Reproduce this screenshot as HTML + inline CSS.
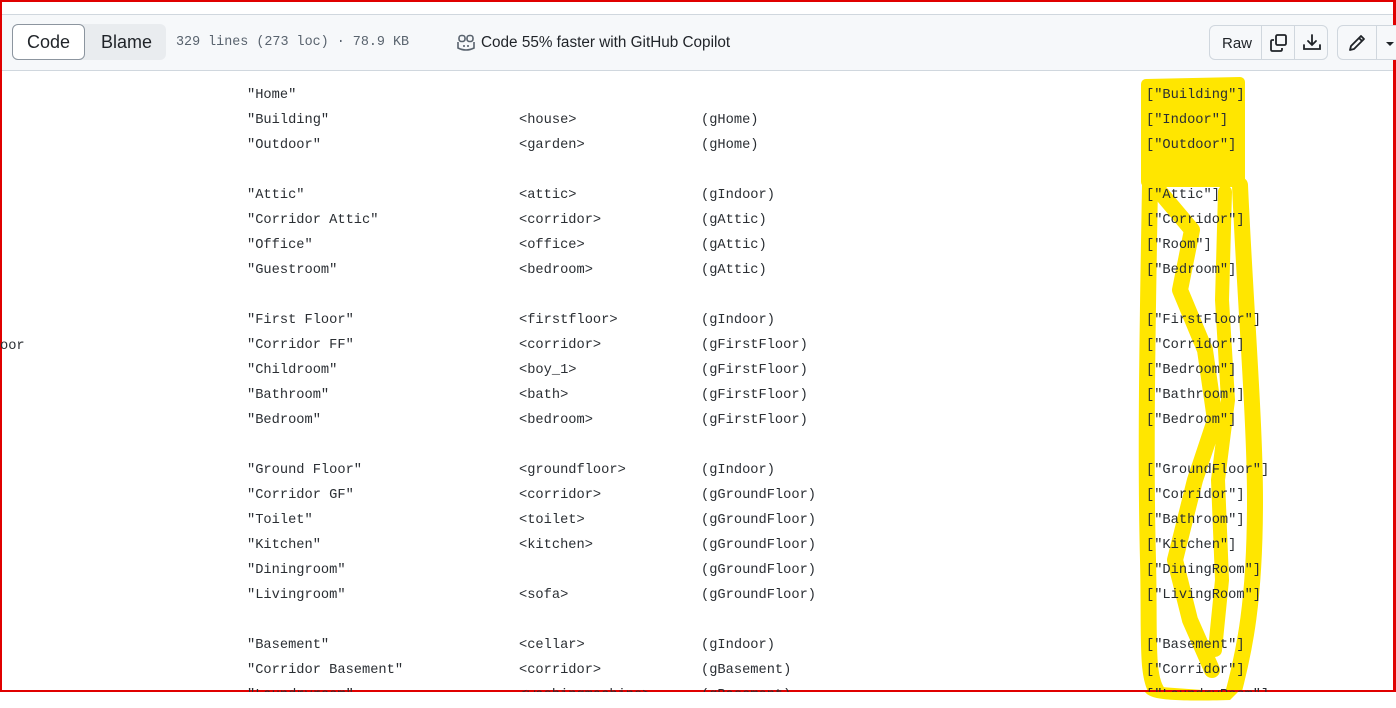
<!DOCTYPE html>
<html><head><meta charset="utf-8"><style>
*{margin:0;padding:0;box-sizing:border-box}
body{width:1396px;height:706px;background:#fff;position:relative;overflow:hidden;font-family:"Liberation Sans",sans-serif}
.frame{position:absolute;left:0;top:0;width:1396px;height:692px;border:2px solid #e00000;border-right-width:3px}
.hdr{position:absolute;left:2px;top:14px;width:1391px;height:57px;background:#f6f8fa;border-top:1px solid #d0d7de;border-bottom:1px solid #d0d7de}
.seg{position:absolute;left:10px;top:9px;width:154px;height:36px;background:#e9ecef;border-radius:6px}
.code{position:absolute;left:0;top:0;width:73px;height:36px;background:#fff;border:1px solid #8c959f;border-radius:6px;font-size:18px;color:#1f2328;text-align:center;line-height:34px}
.blame{position:absolute;left:89px;top:0;font-size:18px;color:#1f2328;line-height:36px}
.meta{position:absolute;left:174px;top:10px;line-height:36px;font-family:"Liberation Mono",monospace;font-size:13.4px;color:#59636e}
.cop{position:absolute;top:10px;line-height:36px;font-size:15.3px;color:#1f2328}
.btns{position:absolute;left:1207px;top:10px;width:119px;height:35px;border:1px solid #d0d7de;border-radius:6px;background:#f6f8fa}
.btns div{position:absolute;top:0;height:33px;border-left:1px solid #d0d7de}
.raw{position:absolute;left:12px;top:1px;line-height:33px;font-size:15px;color:#1f2328}
.btn2{position:absolute;left:1335px;top:10px;width:70px;height:35px;border:1px solid #d0d7de;border-radius:6px;background:#f6f8fa}
.ln{position:absolute;font-family:"Liberation Mono",monospace;font-size:13.7px;color:#2a2e33;white-space:pre;line-height:25px}
svg.y{position:absolute;left:0;top:0}
</style></head><body>
<svg class="y" width="1396" height="706">
<g fill="none" stroke="#ffe600" stroke-linecap="round" stroke-linejoin="round">
<path d="M1146 84 L1240 82 L1240 182 L1146 182 Z" fill="#ffe600" stroke-width="10"/>
<path d="M1150 185 C1148 300 1145 450 1148 560 C1150 640 1145 680 1160 695 L1230 700" stroke-width="16"/>
<path d="M1240 185 C1245 300 1255 420 1255 500 C1255 600 1245 650 1232 698" stroke-width="16"/>
<path d="M1160 192 L1192 230 L1180 290 L1205 350 L1215 420 L1195 480 L1175 560 L1190 620 L1212 670" stroke-width="16"/>
<path d="M1225 192 L1222 300 L1228 400 L1218 480 L1222 580 L1215 650" stroke-width="14"/>
</g>
</svg>
<div class="frame"></div>
<div class="hdr">
<div class="seg"><div class="code">Code</div><div class="blame">Blame</div></div>
<div class="meta">329 lines (273 loc) · 78.9 KB</div>
<svg style="position:absolute;left:454px;top:19px" width="20" height="18" viewBox="0 0 20 18"><g fill="none" stroke="#59636e" stroke-width="1.6"><rect x="3" y="1.5" width="6" height="6" rx="2.5"/><rect x="11" y="1.5" width="6" height="6" rx="2.5"/><path d="M2 8 L2 14 Q10 18 18 14 L18 8"/><path d="M8 11v2M12 11v2"/></g></svg>
<div class="cop" style="left:479px">Code 55% faster with GitHub Copilot</div>
<div class="btns"><span class="raw">Raw</span><div style="left:51px"></div><div style="left:84px"></div>
<svg style="position:absolute;left:59px;top:7px" width="20" height="20" viewBox="0 0 20 20"><g fill="none" stroke="#1f2328" stroke-width="1.8"><rect x="7" y="2" width="10" height="10" rx="1.5"/><path d="M5 7 H3.5 Q2 7 2 8.5 V16.5 Q2 18 3.5 18 H11.5 Q13 18 13 16.5 V15"/></g></svg>
<svg style="position:absolute;left:92px;top:7px" width="20" height="20" viewBox="0 0 20 20"><g fill="none" stroke="#1f2328" stroke-width="1.8" stroke-linecap="round"><path d="M10 2v10M6 8l4 4 4-4M2 12v4h16v-4"/></g></svg>
</div>
<div class="btn2"><div style="position:absolute;left:38px;top:0;height:33px;border-left:1px solid #d0d7de"></div>
<svg style="position:absolute;left:9px;top:7px" width="20" height="20" viewBox="0 0 20 20"><path d="M3 17l1-4L14 3l3 3L7 16z M12 5l3 3" fill="none" stroke="#1f2328" stroke-width="1.8" stroke-linejoin="round"/></svg>
<svg style="position:absolute;left:47px;top:14px" width="10" height="8"><path d="M1 2h8L5 6z" fill="#1f2328"/></svg>
</div>
</div>
<div class="ln" style="left:0;top:334px">oor</div>
<div class="ln" style="left:247px;top:83px">"Home"
"Building"
"Outdoor"

"Attic"
"Corridor Attic"
"Office"
"Guestroom"

"First Floor"
"Corridor FF"
"Childroom"
"Bathroom"
"Bedroom"

"Ground Floor"
"Corridor GF"
"Toilet"
"Kitchen"
"Diningroom"
"Livingroom"

"Basement"
"Corridor Basement"
"Laundryroom"</div>
<div class="ln" style="left:519px;top:83px">
&lt;house&gt;
&lt;garden&gt;

&lt;attic&gt;
&lt;corridor&gt;
&lt;office&gt;
&lt;bedroom&gt;

&lt;firstfloor&gt;
&lt;corridor&gt;
&lt;boy_1&gt;
&lt;bath&gt;
&lt;bedroom&gt;

&lt;groundfloor&gt;
&lt;corridor&gt;
&lt;toilet&gt;
&lt;kitchen&gt;

&lt;sofa&gt;

&lt;cellar&gt;
&lt;corridor&gt;
&lt;washingmachine&gt;</div>
<div class="ln" style="left:701px;top:83px">
(gHome)
(gHome)

(gIndoor)
(gAttic)
(gAttic)
(gAttic)

(gIndoor)
(gFirstFloor)
(gFirstFloor)
(gFirstFloor)
(gFirstFloor)

(gIndoor)
(gGroundFloor)
(gGroundFloor)
(gGroundFloor)
(gGroundFloor)
(gGroundFloor)

(gIndoor)
(gBasement)
(gBasement)</div>
<div class="ln" style="left:1146px;top:83px">["Building"]
["Indoor"]
["Outdoor"]

["Attic"]
["Corridor"]
["Room"]
["Bedroom"]

["FirstFloor"]
["Corridor"]
["Bedroom"]
["Bathroom"]
["Bedroom"]

["GroundFloor"]
["Corridor"]
["Bathroom"]
["Kitchen"]
["DiningRoom"]
["LivingRoom"]

["Basement"]
["Corridor"]
["LaundryRoom"]</div>
<div style="position:absolute;left:0;top:692px;width:1396px;height:14px;background:#fff"></div>
<svg style="position:absolute;left:0;top:692px" width="1396" height="14"><path d="M1145 0 C1150 6 1160 10 1230 8 L1238 0" fill="#ffe600"/></svg>
</body></html>
